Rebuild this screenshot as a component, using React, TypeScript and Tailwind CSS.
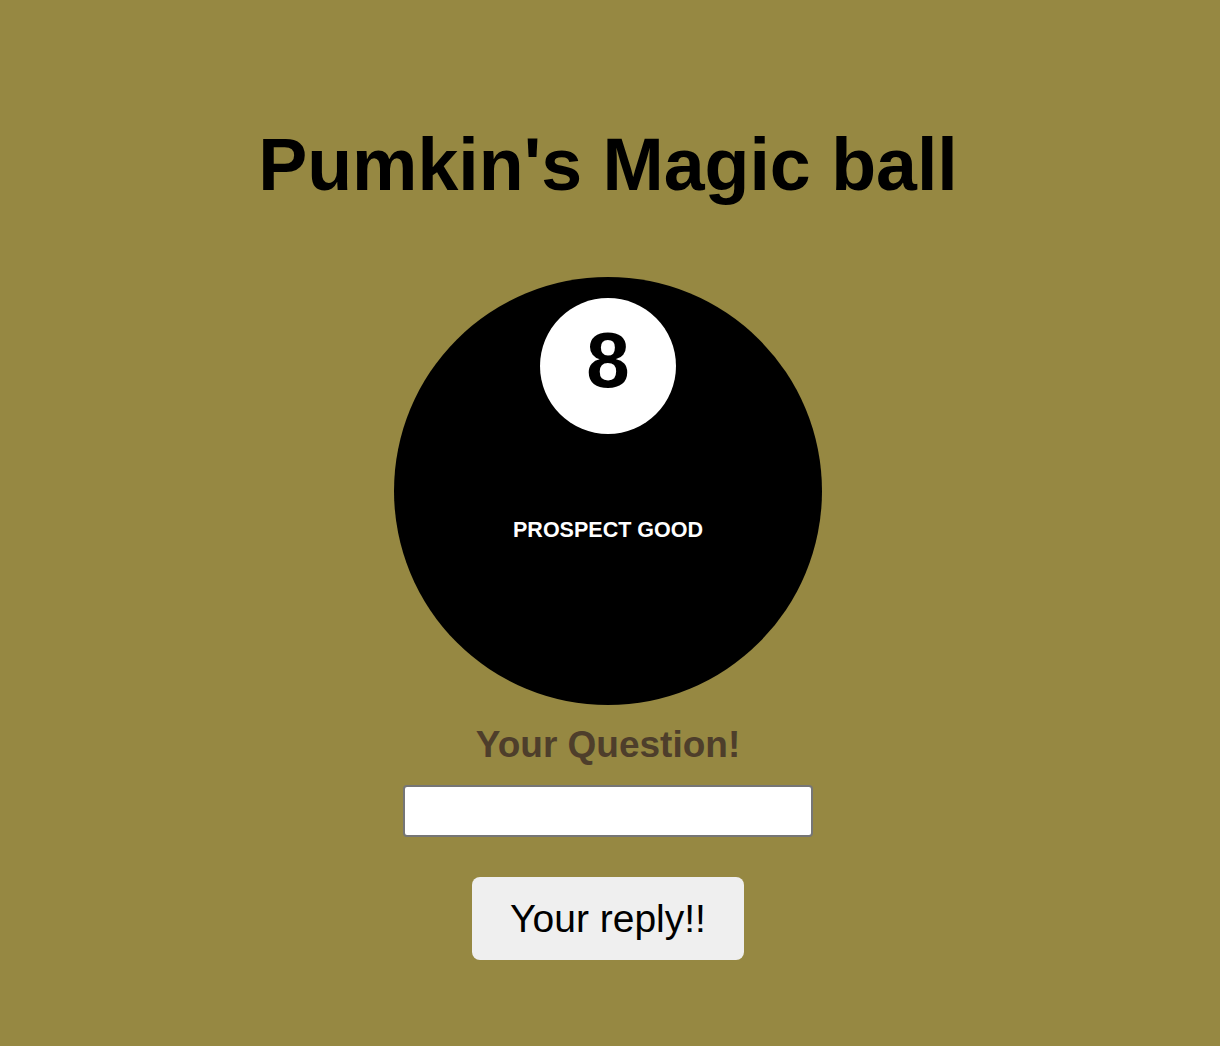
import React, { useState } from "react";

const App = () => {
  const [question, setQuestion] = useState("");

  return (
    <div className="min-h-screen bg-[#968842] flex flex-col items-center pr-1 font-['Liberation_Sans',Arial,sans-serif]">
      {/* Title */}
      <h1 className="pt-[128px] text-[73.5px] leading-none font-bold text-black">
        Pumkin's Magic ball
      </h1>

      {/* Ball */}
      <div className="mt-[75px] w-[428px] h-[428px] rounded-full bg-black flex flex-col items-center">
        <div className="mt-[21px] w-[136px] h-[136px] rounded-full bg-white flex items-center justify-center pb-3">
          <span className="text-[78px] leading-none font-bold text-black">8</span>
        </div>
        <p className="mt-[86px] text-[21.5px] leading-none font-bold text-white">
          PROSPECT GOOD
        </p>
      </div>

      {/* Question */}
      <h2 className="mt-[21px] text-[37px] leading-none font-bold text-[#4e3e2b]">
        Your Question!
      </h2>
      <input
        type="text"
        value={question}
        onChange={(e) => setQuestion(e.target.value)}
        className="mt-[22px] w-[410px] h-[52px] bg-white border-2 border-[#767676] rounded-sm px-2 text-xl outline-none"
      />
      <button className="mt-[40px] w-[272px] h-[83px] rounded-lg bg-[#efefef] text-[39px] leading-none text-black">
        Your reply!!
      </button>
    </div>
  );
};

export default App;
